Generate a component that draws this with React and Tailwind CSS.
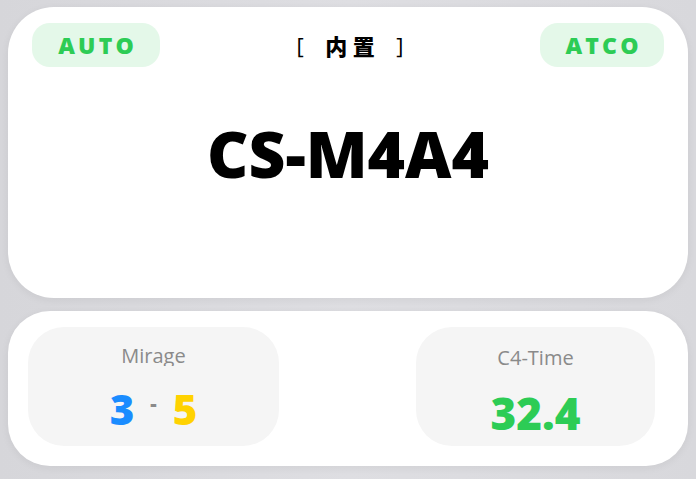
import React from 'react';

const heavy = { fontFamily: '"Open Sans", "Noto Sans", "Noto Sans CJK SC", sans-serif' };

const Pill = ({ children }) => (
  <div className="flex h-[44px] items-center justify-center rounded-[18px] bg-[#e4f8e9]">
    <span className="pl-[0.14em] text-[23px] font-extrabold tracking-[0.14em] text-[#2dcc55]" style={heavy}>
      {children}
    </span>
  </div>
);

const StatBox = ({ label, width, labelTop, clip, children }) => (
  <div className={`flex h-[119px] flex-col items-center rounded-[36px] bg-[#f5f5f5] ${width}`}>
    <div
      className={`${labelTop} ${clip ? 'h-[23px] overflow-hidden' : 'h-[26px]'} text-[20px] leading-[26px] text-[#8a8a8a]`}
      style={{ fontFamily: '"Open Sans", sans-serif' }}
    >
      {label}
    </div>
    {children}
  </div>
);

export default function App() {
  return (
    <div className="flex h-[479px] w-full flex-col gap-[13px] bg-gradient-to-r from-[#d6d6da] via-[#dedee2] to-[#d8d8dc] px-[8px] pt-[7px]">
      <div className="flex h-[291px] flex-col rounded-[46px] bg-white px-[24px] pt-[16px] shadow-[0_2px_8px_rgba(0,0,0,0.06)]">
        <div className="flex items-center justify-between">
          <div className="w-[128px]">
            <Pill>AUTO</Pill>
          </div>
          <div className="flex items-center gap-[16px] text-[22px] font-bold text-black" style={heavy}>
            <span className="font-normal">[</span>
            <span className="pl-[0.25em] tracking-[0.25em]" style={{ fontFamily: '"Noto Sans CJK SC", sans-serif', fontWeight: 900 }}>内置</span>
            <span className="font-normal">]</span>
          </div>
          <div className="w-[124px]">
            <Pill>ATCO</Pill>
          </div>
        </div>
        <div className="mt-[55px] flex justify-center">
          <h1 className="text-[64px] font-extrabold leading-none text-black" style={heavy}>
            CS-M4A4
          </h1>
        </div>
      </div>

      <div className="flex h-[155px] items-start justify-between rounded-[42px] bg-white pl-[20px] pr-[33px] pt-[16px] shadow-[0_2px_8px_rgba(0,0,0,0.06)]">
        <StatBox label="Mirage" width="w-[251px]" labelTop="mt-[16px]" clip>
          <div className="mt-[22px] flex items-baseline gap-[16px] text-[42px] font-extrabold leading-none" style={heavy}>
            <span className="text-[#1a8cff]">3</span>
            <span className="-translate-y-[14px] text-[20px] text-[#8a8a8a]">-</span>
            <span className="text-[#ffd200]">5</span>
          </div>
        </StatBox>
        <StatBox label="C4-Time" width="w-[239px]" labelTop="mt-[18px]">
          <div className="mt-[20px] text-[44px] font-extrabold leading-none text-[#2dcc55]" style={heavy}>
            32.4
          </div>
        </StatBox>
      </div>
    </div>
  );
}
